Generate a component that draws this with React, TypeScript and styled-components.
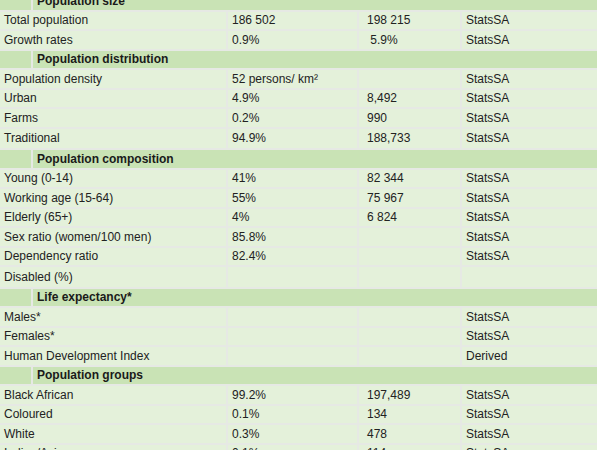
import React from 'react';
import styled, { createGlobalStyle } from 'styled-components';

const GlobalStyle = createGlobalStyle`
  html, body {
    margin: 0;
    padding: 0;
    background: #ffffff;
    overflow: hidden;
  }
`;

type DataRow = [string, string, string, string];

interface Section {
  title: string;
  rows: DataRow[];
}

const sections: Section[] = [
  {
    title: 'Population size',
    rows: [
      ['Total population', '186 502', '198 215', 'StatsSA'],
      ['Growth rates', '0.9%', ' 5.9%', 'StatsSA'],
    ],
  },
  {
    title: 'Population distribution',
    rows: [
      ['Population density', '52 persons/ km²', '', 'StatsSA'],
      ['Urban', '4.9%', '8,492', 'StatsSA'],
      ['Farms', '0.2%', '990', 'StatsSA'],
      ['Traditional', '94.9%', '188,733', 'StatsSA'],
    ],
  },
  {
    title: 'Population composition',
    rows: [
      ['Young (0-14)', '41%', '82 344', 'StatsSA'],
      ['Working age (15-64)', '55%', '75 967', 'StatsSA'],
      ['Elderly (65+)', '4%', '6 824', 'StatsSA'],
      ['Sex ratio (women/100 men)', '85.8%', '', 'StatsSA'],
      ['Dependency ratio', '82.4%', '', 'StatsSA'],
      ['Disabled (%)', '', '', ''],
    ],
  },
  {
    title: 'Life expectancy*',
    rows: [
      ['Males*', '', '', 'StatsSA'],
      ['Females*', '', '', 'StatsSA'],
      ['Human Development Index', '', '', 'Derived'],
    ],
  },
  {
    title: 'Population groups',
    rows: [
      ['Black African', '99.2%', '197,489', 'StatsSA'],
      ['Coloured', '0.1%', '134', 'StatsSA'],
      ['White', '0.3%', '478', 'StatsSA'],
      ['Indian/Asian', '0.1%', '114', 'StatsSA'],
    ],
  },
];

const tallRows = ['Traditional', 'Disabled (%)'];

const Sheet = styled.div`
  width: 597px;
  margin-top: -8px;
  display: flex;
  flex-direction: column;
  gap: 2px;
  background: #e6e9e4;
  font-family: 'Liberation Sans', Arial, sans-serif;
  font-size: 12px;
  color: #222222;
`;

const HeaderRow = styled.div`
  display: grid;
  grid-template-columns: 31px 1fr;
  gap: 2px;
  height: 17.5px;
`;

const HeaderCell = styled.div`
  background: #c9e3b5;
  display: flex;
  align-items: center;
  padding-left: 4px;
  font-weight: bold;
  color: #1a1a1a;
`;

const Row = styled.div<{ $tall?: boolean }>`
  display: grid;
  grid-template-columns: 226px 129px 101px 135px;
  gap: 2px;
  height: ${(p) => (p.$tall ? '19.5px' : '17.5px')};
`;

const Cell = styled.div<{ $pad?: number }>`
  background: #e4f1da;
  display: flex;
  align-items: center;
  padding-left: ${(p) => p.$pad ?? 4}px;
  white-space: pre;
  overflow: hidden;
`;

export default function App() {
  return (
    <>
      <GlobalStyle />
      <Sheet>
        {sections.map((s) => (
          <React.Fragment key={s.title}>
            <HeaderRow>
              <HeaderCell />
              <HeaderCell>{s.title}</HeaderCell>
            </HeaderRow>
            {s.rows.map((r) => (
              <Row key={r[0]} $tall={tallRows.includes(r[0])}>
                <Cell>{r[0]}</Cell>
                <Cell>{r[1]}</Cell>
                <Cell $pad={8}>{r[2]}</Cell>
                <Cell>{r[3]}</Cell>
              </Row>
            ))}
          </React.Fragment>
        ))}
      </Sheet>
    </>
  );
}
